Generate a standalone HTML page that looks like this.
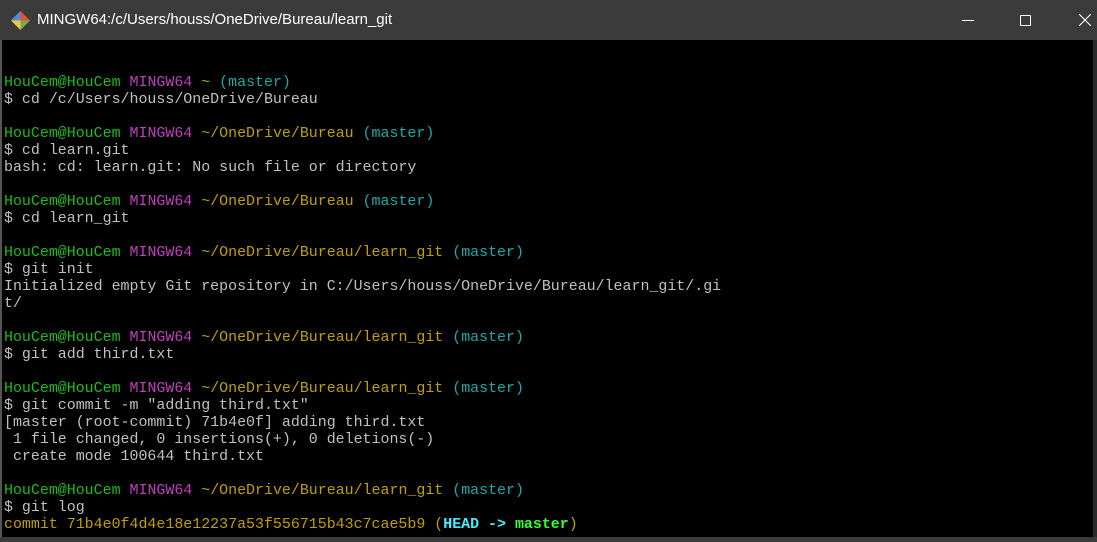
<!DOCTYPE html>
<html><head><meta charset="utf-8"><style>
html,body{margin:0;padding:0;background:#000;}
body{width:1097px;height:542px;overflow:hidden;position:relative;}
#tb{position:absolute;left:0;top:0;width:1097px;height:40px;background:#3b3b3b;}
#title{position:absolute;left:37px;top:11px;color:#fff;font:15px "Liberation Sans",sans-serif;}
#term{position:absolute;left:2px;top:40px;width:1090px;height:497px;background:#000;}
#lb{position:absolute;left:0;top:40px;width:2px;height:502px;background:#555;}
#rb{position:absolute;left:1093px;top:40px;width:4px;height:502px;background:#2a2a2a;}
#bb{position:absolute;left:0;top:537px;width:1097px;height:5px;background:#3b3b3b;}
pre{position:absolute;left:4px;top:75px;margin:0;font:14.95px/17px "Liberation Mono",monospace;color:#c0c0c0;}
.g{color:#1cbc1c}.m{color:#bf3fbf}.y{color:#bfa000}.c{color:#1fa8a8}
.hc{color:#3ff0ff;font-weight:bold}.hg{color:#33ff33;font-weight:bold}
</style></head><body>
<div id="tb">
<svg style="position:absolute;left:11px;top:11px" width="19" height="19" viewBox="0 0 19 19">
<polygon points="9.5,0 19,9.5 9.5,19 0,9.5" fill="#e94e31"/>
<polygon points="0,9.5 9.5,0 9.5,9.5" fill="#4a90d9"/>
<polygon points="9.5,19 0,9.5 9.5,9.5" fill="#f6c343"/>
<polygon points="19,9.5 9.5,19 9.5,9.5" fill="#6ab04c"/>
</svg>
<div id="title">MINGW64:/c/Users/houss/OneDrive/Bureau/learn_git</div>
<div style="position:absolute;left:962px;top:20px;width:12px;height:1px;background:#fff"></div>
<div style="position:absolute;left:1020px;top:15px;width:9px;height:9px;border:1px solid #fff;border-radius:1px"></div>
<svg style="position:absolute;left:1079px;top:14px" width="12" height="12"><path d="M0 0L12 12M12 0L0 12" stroke="#fff" stroke-width="1.1"/></svg>
</div>
<div id="term"></div><div id="lb"></div><div id="rb"></div><div id="bb"></div>
<pre><span class="g">HouCem@HouCem</span> <span class="m">MINGW64</span> <span class="y">~</span> <span class="c">(master)</span>
$ cd /c/Users/houss/OneDrive/Bureau

<span class="g">HouCem@HouCem</span> <span class="m">MINGW64</span> <span class="y">~/OneDrive/Bureau</span> <span class="c">(master)</span>
$ cd learn.git
bash: cd: learn.git: No such file or directory

<span class="g">HouCem@HouCem</span> <span class="m">MINGW64</span> <span class="y">~/OneDrive/Bureau</span> <span class="c">(master)</span>
$ cd learn_git

<span class="g">HouCem@HouCem</span> <span class="m">MINGW64</span> <span class="y">~/OneDrive/Bureau/learn_git</span> <span class="c">(master)</span>
$ git init
Initialized empty Git repository in C:/Users/houss/OneDrive/Bureau/learn_git/.gi
t/

<span class="g">HouCem@HouCem</span> <span class="m">MINGW64</span> <span class="y">~/OneDrive/Bureau/learn_git</span> <span class="c">(master)</span>
$ git add third.txt

<span class="g">HouCem@HouCem</span> <span class="m">MINGW64</span> <span class="y">~/OneDrive/Bureau/learn_git</span> <span class="c">(master)</span>
$ git commit -m "adding third.txt"
[master (root-commit) 71b4e0f] adding third.txt
 1 file changed, 0 insertions(+), 0 deletions(-)
 create mode 100644 third.txt

<span class="g">HouCem@HouCem</span> <span class="m">MINGW64</span> <span class="y">~/OneDrive/Bureau/learn_git</span> <span class="c">(master)</span>
$ git log
<span class="y">commit 71b4e0f4d4e18e12237a53f556715b43c7cae5b9 (</span><span class="hc">HEAD -&gt; </span><span class="hg">master</span><span class="y">)</span></pre>
</body></html>
